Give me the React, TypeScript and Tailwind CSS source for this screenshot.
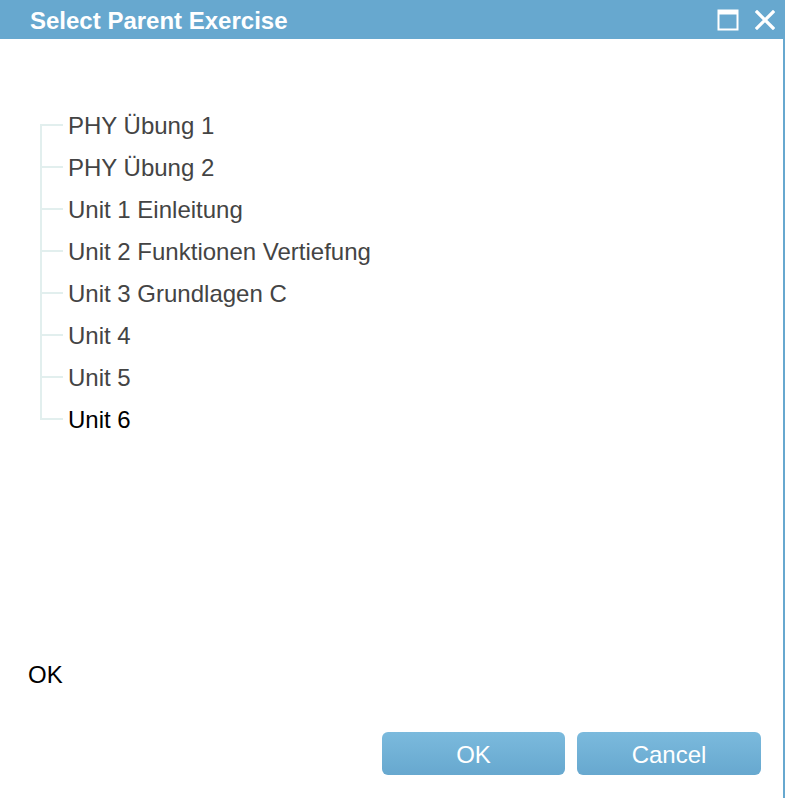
const items = [
  "PHY Übung 1",
  "PHY Übung 2",
  "Unit 1 Einleitung",
  "Unit 2 Funktionen Vertiefung",
  "Unit 3 Grundlagen C",
  "Unit 4",
  "Unit 5",
  "Unit 6",
];

function TreeRow({ label, first, last, selected }: { label: string; first: boolean; last: boolean; selected: boolean }) {
  return (
    <div className="flex h-[42px] items-stretch">
      <div className="flex w-[23px] flex-col">
        <div className={"flex-1 " + (first ? "" : "border-l-2 border-[#e2efee]")} />
        <div className="h-[2px] bg-[#e2efee]" />
        <div className={"flex-1 " + (last ? "" : "border-l-2 border-[#e2efee]")} />
      </div>
      <div
        className={
          "ml-[5px] flex items-center pt-[2px] text-[24px] leading-none " +
          (selected ? "text-black" : "text-[#444444]")
        }
      >
        {label}
      </div>
    </div>
  );
}

export default function App() {
  return (
    <div className="flex h-[798px] w-[785px] flex-col overflow-hidden border-r-2 border-[#67a8cf] bg-white font-['Liberation_Sans',Arial,sans-serif]">
      <div className="flex h-[39px] shrink-0 items-center bg-[#67a8cf] pl-[30px] pr-[8px]">
        <h1 className="flex-1 pt-[3px] text-[24px] font-bold leading-none text-white">Select Parent Exercise</h1>
        <svg width="22" height="22" viewBox="0 0 22 22" className="mr-[16px]">
          <rect x="1.5" y="1.5" width="19" height="19" fill="none" stroke="#ffffff" strokeWidth="2" />
          <rect x="1.5" y="1.5" width="19" height="4" fill="#ffffff" />
        </svg>
        <svg width="20" height="20" viewBox="0 0 20 20">
          <path d="M2 2 L18 18 M18 2 L2 18" stroke="#ffffff" strokeWidth="3.2" strokeLinecap="square" />
        </svg>
      </div>

      <div className="flex-1 pl-[40px] pt-[65px]">
        {items.map((label, i) => (
          <TreeRow
            key={label}
            label={label}
            first={i === 0}
            last={i === items.length - 1}
            selected={i === items.length - 1}
          />
        ))}
      </div>

      <div className="pl-[28px] text-[24px] leading-[28px] text-black">OK</div>

      <div className="flex justify-end gap-[12px] pb-[23px] pr-[22px] pt-[43px]">
        <button className="h-[43px] w-[183px] rounded-[6px] bg-gradient-to-b from-[#7bbadd] to-[#67a8cf] pt-[2px] text-[24px] leading-none text-white">
          OK
        </button>
        <button className="h-[43px] w-[184px] rounded-[6px] bg-gradient-to-b from-[#7bbadd] to-[#67a8cf] pt-[2px] text-[24px] leading-none text-white">
          Cancel
        </button>
      </div>
    </div>
  );
}
